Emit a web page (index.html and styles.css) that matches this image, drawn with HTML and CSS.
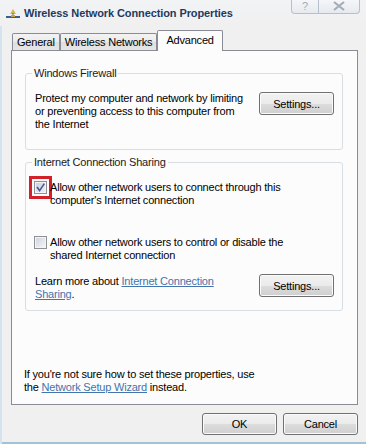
FILE: index.html
```html
<!DOCTYPE html>
<html>
<head>
<meta charset="utf-8">
<link rel="stylesheet" href="styles.css">
</head>
<body>
<div class="window">
  <div class="titlebar">
    <svg class="app-icon" width="16" height="12" viewBox="0 0 16 12">
      <path d="M8 2 L11 7 L5 7 Z" fill="#d8b44a"/>
      <rect x="7.5" y="6" width="1" height="3" fill="#6a6a4a"/>
      <rect x="1" y="9" width="14" height="2" fill="#3d5d8a"/>
      <rect x="6" y="8" width="4" height="2" fill="#c9a43c"/>
    </svg>
    <span class="title">Wireless Network Connection Properties</span>
    <div class="caption-buttons">
      <span class="cap-btn help">?</span>
      <span class="cap-btn close">
        <svg width="14" height="10" viewBox="0 0 14 10"><path d="M2 1 L12 9 M12 1 L2 9" stroke="#a3adb8" stroke-width="2.2" fill="none"/></svg>
      </span>
    </div>
  </div>
  <div class="tabs">
    <div class="tab">General</div>
    <div class="tab">Wireless Networks</div>
    <div class="tab active">Advanced</div>
  </div>
  <div class="panel">
    <fieldset class="group firewall">
      <legend>Windows Firewall</legend>
      <div class="group-row">
        <p class="desc">Protect my computer and network by limiting or preventing access to this computer from the Internet</p>
        <button class="btn">Settings...</button>
      </div>
    </fieldset>
    <fieldset class="group ics">
      <legend>Internet Connection Sharing</legend>
      <div class="check-row first">
        <span class="checkbox highlighted">
          <svg width="11" height="11" viewBox="0 0 11 11"><path d="M2 5 L4.6 8.6 L9.3 1.6" stroke="#4a5e96" stroke-width="1.7" fill="none"/></svg>
        </span>
        <span class="check-label">Allow other network users to connect through this computer's Internet connection</span>
      </div>
      <div class="check-row second">
        <span class="checkbox"></span>
        <span class="check-label">Allow other network users to control or disable the shared Internet connection</span>
      </div>
      <div class="group-row learn">
        <p class="desc">Learn more about <a class="link" href="#">Internet Connection Sharing</a>.</p>
        <button class="btn">Settings...</button>
      </div>
    </fieldset>
    <p class="footer">If you're not sure how to set these properties, use the <a class="link" href="#">Network Setup Wizard</a> instead.</p>
  </div>
  <div class="dialog-buttons">
    <button class="btn dlg">OK</button>
    <button class="btn dlg">Cancel</button>
  </div>
</div>
</body>
</html>
```

FILE: styles.css
```css
html, body {
  margin: 0;
  padding: 0;
  background: #f0f0f0;
}

body {
  font-family: "Liberation Sans", Arial, sans-serif;
  font-size: 11px;
  letter-spacing: -0.2px;
  color: #000;
}

.window {
  width: 366px;
  height: 444px;
  box-sizing: border-box;
  background: #f0f0f0;
  box-shadow: inset 2px 0 #d3e3ef, inset 0 -2px #a3c2d5;
  display: flex;
  flex-direction: column;
  overflow: hidden;
}

.titlebar {
  height: 26px;
  flex: none;
  display: flex;
  align-items: center;
  padding-left: 5px;
  background: linear-gradient(#f1f3f5, #f0f0f0);
}

.app-icon {
  margin-right: 3px;
  flex: none;
}

.title {
  font-weight: bold;
  color: #1f3a5f;
  letter-spacing: -0.1px;
}

.caption-buttons {
  margin-left: auto;
  margin-right: 6px;
  align-self: flex-start;
  display: flex;
  height: 14px;
  margin-top: -1px;
  border: 1px solid #b7c0ca;
  border-top: none;
  border-radius: 0 0 4px 4px;
  background: linear-gradient(#f5f7f9, #e6eaef);
}

.cap-btn {
  display: flex;
  align-items: center;
  justify-content: center;
  color: #a3adb8;
  font-size: 11px;
}

.cap-btn.help {
  width: 26px;
  border-right: 1px solid #b7c0ca;
}

.cap-btn.close {
  width: 40px;
}

.tabs {
  display: flex;
  align-items: flex-end;
  padding: 4px 0 0 12px;
  flex: none;
}

.tab {
  height: 17px;
  box-sizing: border-box;
  border: 1px solid #898c95;
  border-bottom: none;
  border-radius: 2px 2px 0 0;
  padding: 2px 4px 0;
  line-height: 13px;
  white-space: nowrap;
  background: linear-gradient(#f3f3f3 0%, #ebebeb 50%, #dedede 50%, #e6e6e6 100%);
}

.tab.active {
  height: 21px;
  margin-bottom: -1px;
  padding: 3px 8px 0;
  background: #fcfcfc;
  position: relative;
  z-index: 1;
}

.panel {
  margin: 0 8px 0 11px;
  height: 355px;
  box-sizing: border-box;
  border: 1px solid #898c95;
  background: #fcfcfc;
  padding: 16px 14px 10px 13px;
  display: flex;
  flex-direction: column;
  flex: none;
}

.group {
  margin: 0;
  border: 1px solid #d5dfe5;
  border-radius: 3px;
  padding: 0 8px 18px 9px;
  min-width: 0;
}

.group legend {
  padding: 0 2px;
  margin-left: -3px;
  line-height: 13px;
  color: #1a1a1a;
}

.group.ics {
  margin-top: 6px;
  padding-bottom: 9px;
}

.group-row {
  display: flex;
  justify-content: space-between;
  align-items: flex-start;
  margin-top: 12px;
}

.desc {
  margin: 0;
  width: 215px;
  line-height: 13px;
}

.group-row.learn .desc {
  margin-top: 1px;
}

.check-row {
  display: flex;
  align-items: flex-start;
  gap: 3px;
  margin-left: -1px;
  line-height: 13px;
}

.check-row.first {
  margin-top: 12px;
}

.check-row.second {
  margin-top: 29px;
}

.check-label {
  max-width: 250px;
}

.checkbox {
  flex: none;
  width: 13px;
  height: 13px;
  box-sizing: border-box;
  border: 1px solid #8f9091;
  background: linear-gradient(135deg, #cfd2dc 0%, #e4e6ee 55%, #f7f7f9 100%);
  box-shadow: inset 0 0 0 1px #f4f4f4;
  display: flex;
  align-items: center;
  justify-content: center;
}

.checkbox.highlighted {
  outline: 3px solid #d3202a;
  outline-offset: 2px;
  background: linear-gradient(135deg, #c9cde0 0%, #dfe2ee 55%, #f1f2f8 100%);
}

.link {
  color: #4374ad;
  text-decoration: underline;
}

.footer {
  margin: auto 0 0 -1px;
  width: 245px;
  line-height: 13px;
}

.btn {
  width: 75px;
  height: 23px;
  box-sizing: border-box;
  border: 1px solid #707070;
  border-radius: 3px;
  background: linear-gradient(#f2f2f2 0%, #ebebeb 50%, #dddddd 50%, #cfcfcf 100%);
  box-shadow: inset 0 0 0 1px #fbfbfb;
  font: inherit;
  letter-spacing: inherit;
  color: #000;
  padding: 0;
  flex: none;
}

.dialog-buttons {
  display: flex;
  justify-content: flex-end;
  gap: 6px;
  padding: 8px 8px 0 0;
}

.btn.dlg {
  height: 22px;
}
```
